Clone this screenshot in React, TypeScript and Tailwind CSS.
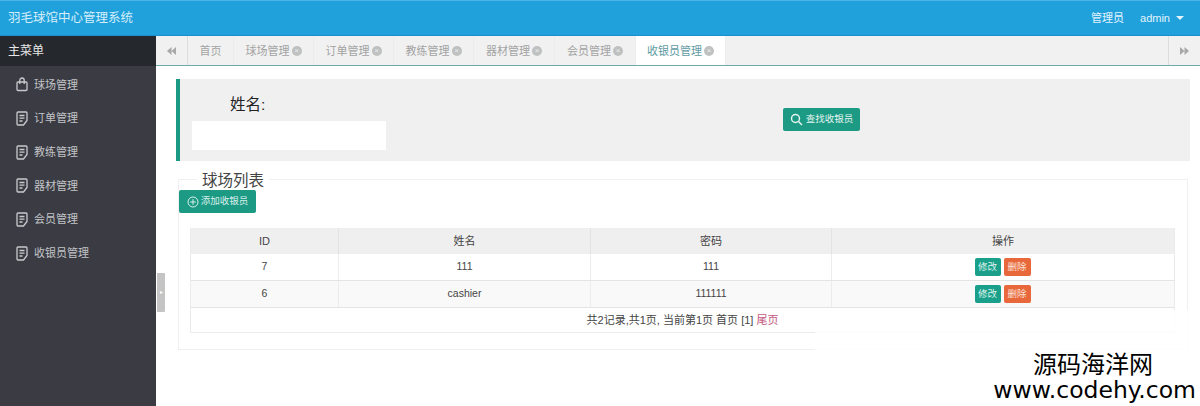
import React from "react";

const FONT = "font-['Liberation_Sans','Noto_Sans_CJK_SC',sans-serif]";

function DocIcon() {
  return (
    <svg width="14" height="15" viewBox="0 0 14 15" fill="none" stroke="#c9cacd" strokeWidth="1.3" className="shrink-0">
      <path d="M12 9.5V2a1 1 0 0 0-1-1H3a1 1 0 0 0-1 1v11a1 1 0 0 0 1 1h5.5L12 9.5Z" />
      <path d="M4.5 4.5h5M4.5 7.2h5M4.5 10h3" />
    </svg>
  );
}

function BagIcon() {
  return (
    <svg width="14" height="15" viewBox="0 0 14 15" fill="none" stroke="#c9cacd" strokeWidth="1.3" className="shrink-0">
      <rect x="2" y="5" width="10" height="8.5" rx="1" />
      <path d="M4.8 7V3.2a2.2 2.2 0 0 1 4.4 0V7" />
    </svg>
  );
}

function CloseDot() {
  return (
    <span className="inline-flex h-[10px] w-[10px] items-center justify-center rounded-full bg-[#bfc1c1] text-[8px] leading-none text-[#eeeeee]">
      ×
    </span>
  );
}

function Tab({ label, w, active, closable = true }: { label: string; w: string; active?: boolean; closable?: boolean }) {
  return (
    <div
      className={`flex h-full items-center justify-center gap-[2px] border-r border-[#ececec] pt-[1px] text-[11px] ${w} ${
        active ? "bg-white text-[#5f9aa3]" : "text-[#a3a3a3]"
      }`}
    >
      <span>{label}</span>
      {closable && <CloseDot />}
    </div>
  );
}

function MenuItem({ label, bag }: { label: string; bag?: boolean }) {
  return (
    <div className="flex h-[33.7px] items-center gap-[5px] pl-[15px] text-[11px] text-[#c3c4c7]">
      {bag ? <BagIcon /> : <DocIcon />}
      <span>{label}</span>
    </div>
  );
}

function Row({ id, name, pwd, striped, h }: { id: string; name: string; pwd: string; striped?: boolean; h: string }) {
  return (
    <div className={`grid grid-cols-[148px_252px_241px_1fr] border-b border-[#e4e4e4] text-[10.5px] text-[#444444] ${h} ${striped ? "bg-[#f9f9f9]" : "bg-white"}`}>
      <div className="flex items-center justify-center border-r border-[#ececec]">{id}</div>
      <div className="flex items-center justify-center border-r border-[#ececec]">{name}</div>
      <div className="flex items-center justify-center border-r border-[#ececec]">{pwd}</div>
      <div className="flex items-center justify-center gap-[3px] pr-[1px]">
        <span className="flex h-[18px] w-[26px] items-center justify-center rounded-[2px] bg-[#1aa08a] text-[9.5px] text-[#dff3ee]">修改</span>
        <span className="flex h-[18px] w-[27px] items-center justify-center rounded-[2px] bg-[#e8683c] text-[9.5px] text-[#fbe2d8]">删除</span>
      </div>
    </div>
  );
}

export default function App() {
  return (
    <div className={`relative flex h-[406px] w-[1200px] flex-col overflow-hidden bg-white ${FONT}`}>
      <header className="flex h-[36px] shrink-0 items-center justify-between border-t border-t-[#4db5e6] border-b border-b-[#1b8fc7] bg-[#21a1dc] pl-[8px] pr-[16px] text-white">
        <span className="text-[12.5px] text-[#d5eef9]">羽毛球馆中心管理系统</span>
        <div className="flex items-center text-[11px] text-[#e3f3fb]">
          <span>管理员</span>
          <span className="ml-[16px]">admin</span>
          <span className="ml-[6px] h-0 w-0 border-x-[4px] border-t-[4px] border-x-transparent border-t-[#e3f3fb]" />
        </div>
      </header>

      <div className="flex min-h-0 flex-1">
        <aside className="w-[156px] shrink-0 bg-[#3a3b43]">
          <div className="flex h-[30px] items-center bg-[#25282d] pl-[8px] text-[12px] text-[#e6e7e8]">主菜单</div>
          <nav className="pt-[2px]">
            <MenuItem label="球场管理" bag />
            <MenuItem label="订单管理" />
            <MenuItem label="教练管理" />
            <MenuItem label="器材管理" />
            <MenuItem label="会员管理" />
            <MenuItem label="收银员管理" />
          </nav>
        </aside>

        <main className="relative min-w-0 flex-1">
          <div className="flex h-[30px] items-stretch border-b border-b-[#6ba9ab] bg-[#f1f1f1]">
            <div className="flex w-[32px] items-center justify-center border-r border-[#dddddd] text-[#a8a8a8]">
              <svg width="9" height="8" viewBox="0 0 9 8" fill="currentColor"><path d="M4.5 0v8L0 4zM9 0v8L4.5 4z" /></svg>
            </div>
            <Tab label="首页" w="w-[46px]" closable={false} />
            <Tab label="球场管理" w="w-[80px]" />
            <Tab label="订单管理" w="w-[80px]" />
            <Tab label="教练管理" w="w-[80px]" />
            <Tab label="器材管理" w="w-[81px]" />
            <Tab label="会员管理" w="w-[81px]" />
            <Tab label="收银员管理" w="w-[90px]" active />
            <div className="flex-1" />
            <div className="flex w-[32px] items-center justify-center border-l border-[#dddddd] text-[#a8a8a8]">
              <svg width="9" height="8" viewBox="0 0 9 8" fill="currentColor"><path d="M0 0v8l4.5-4zM4.5 0v8L9 4z" /></svg>
            </div>
          </div>

          <div className="absolute left-[1px] top-[237px] flex h-[39px] w-[8px] items-center justify-center rounded-r-[1px] bg-[#c4c4c4] text-[6px] text-white">▸</div>

          <div className="pl-[20px] pr-[10px] pt-[13px]">
            <section className="grid h-[82px] grid-cols-[212px_1fr] border-l-[4px] border-l-[#1a9a85] bg-[#f0f0f1] pl-[12px]">
              <div className="flex flex-col">
                <div className="pl-[38px] pt-[16px] text-[15.5px] leading-[20px] text-[#222222]">姓名:</div>
                <div className="mt-[6px] h-[29px] w-[194px] bg-white" />
              </div>
              <div className="pl-[379px] pt-[29px]">
                <button className="flex h-[23px] w-[77px] items-center justify-center gap-[3px] rounded-[2px] bg-[#1c9a84] text-[9.5px] text-[#e3f4f0]">
                  <svg width="13" height="13" viewBox="0 0 13 13" fill="none" stroke="#e3f4f0" strokeWidth="1.5">
                    <circle cx="5.5" cy="5.5" r="4" />
                    <path d="M8.5 8.5 12 12" />
                  </svg>
                  查找收银员
                </button>
              </div>
            </section>

            <section className="relative ml-[2px] mr-[2px] mt-[18px] h-[171px] border border-[#f1efef] pt-[10px]">
              <div className="absolute left-[18px] top-[-9px] bg-white px-[5px] text-[15.5px] leading-[20px] text-[#444444]">球场列表</div>
              <button className="relative flex h-[23px] w-[77px] items-center justify-center gap-[2px] rounded-[2px] bg-[#1c9a84] text-[9.5px] text-[#d9f0eb]">
                <svg width="12" height="12" viewBox="0 0 12 12" fill="none" stroke="#d9f0eb" strokeWidth="1">
                  <circle cx="6" cy="6" r="5" />
                  <path d="M6 3.2v5.6M3.2 6h5.6" />
                </svg>
                添加收银员
              </button>

              <div className="ml-[11px] mr-[12px] mt-[15px] border-x border-b border-[#ebebeb]">
                <div className="grid h-[26px] grid-cols-[148px_252px_241px_1fr] bg-[#f0efef] text-[11px] text-[#444444]">
                  <div className="flex items-center justify-center border-r border-[#e3e3e3]">ID</div>
                  <div className="flex items-center justify-center border-r border-[#e3e3e3]">姓名</div>
                  <div className="flex items-center justify-center border-r border-[#e3e3e3]">密码</div>
                  <div className="flex items-center justify-center">操作</div>
                </div>
                <Row id="7" name="111" pwd="111" h="h-[27px]" />
                <Row id="6" name="cashier" pwd="111111" striped h="h-[27px]" />
                <div className="flex h-[24px] items-center justify-center text-[11px] text-[#444444]">
                  <span>共2记录,共1页, 当前第1页 首页 [1] <span className="text-[#c2567c]">尾页</span></span>
                </div>
              </div>
            </section>
          </div>
        </main>
      </div>

      <div className="absolute bottom-0 right-0 h-[96px] w-[385px] bg-white/85" />
      <div className="absolute bottom-[3px] right-[4px] flex flex-col items-end text-black">
        <div className="mr-[43px] text-[24px] leading-[26px]">源码海洋网</div>
        <div className="font-['DejaVu_Sans',sans-serif] text-[23.5px] leading-[25px]">www.codehy.com</div>
      </div>
    </div>
  );
}
